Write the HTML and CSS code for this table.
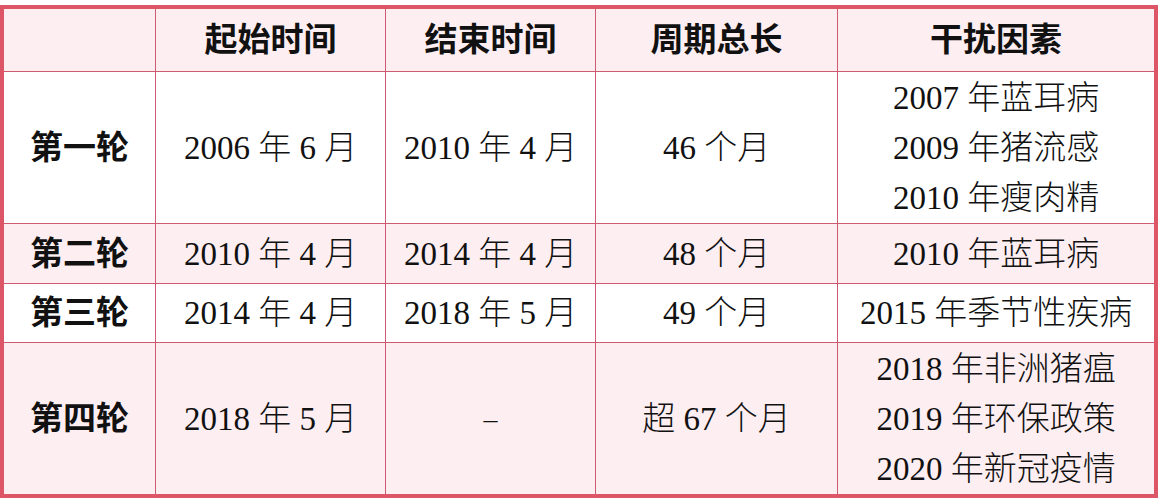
FILE: index.html
```html
<!DOCTYPE html>
<html lang="zh-CN">
<head>
<meta charset="utf-8">
<title>猪周期</title>
<link rel="stylesheet" href="styles.css">
</head>
<body>
<div class="table">
  <div class="cell head"></div>
  <div class="cell head">起始时间</div>
  <div class="cell head">结束时间</div>
  <div class="cell head">周期总长</div>
  <div class="cell head">干扰因素</div>

  <div class="cell first">第一轮</div>
  <div class="cell"><span><span class="n">2006</span> 年 <span class="n">6</span> 月</span></div>
  <div class="cell"><span><span class="n">2010</span> 年 <span class="n">4</span> 月</span></div>
  <div class="cell"><span><span class="n">46</span> 个月</span></div>
  <div class="cell">
    <span><span class="n">2007</span> 年蓝耳病</span>
    <span><span class="n">2009</span> 年猪流感</span>
    <span><span class="n">2010</span> 年瘦肉精</span>
  </div>

  <div class="cell first pink">第二轮</div>
  <div class="cell pink"><span><span class="n">2010</span> 年 <span class="n">4</span> 月</span></div>
  <div class="cell pink"><span><span class="n">2014</span> 年 <span class="n">4</span> 月</span></div>
  <div class="cell pink"><span><span class="n">48</span> 个月</span></div>
  <div class="cell pink"><span><span class="n">2010</span> 年蓝耳病</span></div>

  <div class="cell first">第三轮</div>
  <div class="cell"><span><span class="n">2014</span> 年 <span class="n">4</span> 月</span></div>
  <div class="cell"><span><span class="n">2018</span> 年 <span class="n">5</span> 月</span></div>
  <div class="cell"><span><span class="n">49</span> 个月</span></div>
  <div class="cell"><span><span class="n">2015</span> 年季节性疾病</span></div>

  <div class="cell first pink">第四轮</div>
  <div class="cell pink"><span><span class="n">2018</span> 年 <span class="n">5</span> 月</span></div>
  <div class="cell pink"><span class="n dash">–</span></div>
  <div class="cell pink"><span>超 <span class="n">67</span> 个月</span></div>
  <div class="cell pink">
    <span><span class="n">2018</span> 年非洲猪瘟</span>
    <span><span class="n">2019</span> 年环保政策</span>
    <span><span class="n">2020</span> 年新冠疫情</span>
  </div>
</div>
</body>
</html>
```
FILE: styles.css
```css
html, body {
  margin: 0;
  padding: 0;
  background: #ffffff;
}

body {
  padding-top: 5px;
  font-family: "Liberation Serif", "Noto Sans CJK SC", serif;
  color: #111111;
}

.table {
  display: grid;
  width: 1150px;
  grid-template-columns: 151px 229px 209px 241px 316px;
  grid-template-rows: 62px 151px 59px 58px 151px;
  gap: 1px;
  background: #cd5a70;
  border: 4px solid #dc5668;
}

.cell {
  background: #ffffff;
  display: flex;
  flex-direction: column;
  align-items: center;
  justify-content: center;
  font-size: 33px;
  font-weight: 300;
  line-height: 50px;
  white-space: nowrap;
}

.cell.pink,
.cell.head {
  background: #fdeef2;
}

.cell.head,
.cell.first {
  font-weight: 700;
}

.n {
  font-weight: 400;
}

.dash {
  font-size: 28px;
}
```
